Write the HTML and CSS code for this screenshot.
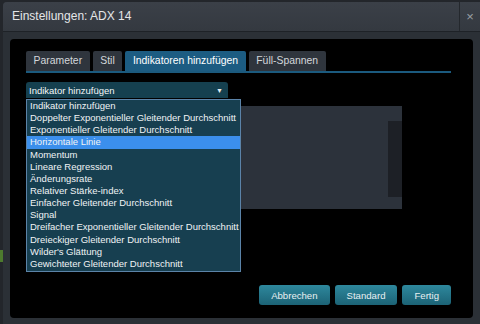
FILE: index.html
```html
<!DOCTYPE html>
<html lang="de">
<head>
    <meta charset="UTF-8">
    <meta name="viewport" content="width=device-width, initial-scale=1.0">
    <title>Einstellungen: ADX 14</title>
    <link rel="stylesheet" href="styles.css">
</head>
<body>
    <div class="backdrop">
        <div class="edge"><span class="edge-mark"></span></div>
        <div class="dialog">
            <div class="dialog-header">
                <span class="dialog-title">Einstellungen: ADX 14</span>
                <button class="close-btn">&times;</button>
            </div>
            <div class="dialog-body">
                <div class="panel">
                    <div class="tabs">
                        <a class="tab" href="#">Parameter</a>
                        <a class="tab" href="#">Stil</a>
                        <a class="tab active" href="#">Indikatoren hinzufügen</a>
                        <a class="tab" href="#">Füll-Spannen</a>
                    </div>

                    <div class="picker">
                        <div class="select">
                            <span>Indikator hinzufügen</span>
                            <span class="arrow">&#9660;</span>
                        </div>
                        <ul class="options">
                            <li>Indikator hinzufügen</li>
                            <li>Doppelter Exponentieller Gleitender Durchschnitt</li>
                            <li>Exponentieller Gleitender Durchschnitt</li>
                            <li class="hover">Horizontale Linie</li>
                            <li>Momentum</li>
                            <li>Lineare Regression</li>
                            <li>Änderungsrate</li>
                            <li>Relativer Stärke-index</li>
                            <li>Einfacher Gleitender Durchschnitt</li>
                            <li>Signal</li>
                            <li>Dreifacher Exponentieller Gleitender Durchschnitt</li>
                            <li>Dreieckiger Gleitender Durchschnitt</li>
                            <li>Wilder's Glättung</li>
                            <li>Gewichteter Gleitender Durchschnitt</li>
                        </ul>
                        <div class="added-list">
                            <div class="scroll-track"></div>
                        </div>
                    </div>

                    <div class="actions">
                        <button class="btn">Abbrechen</button>
                        <button class="btn">Standard</button>
                        <button class="btn">Fertig</button>
                    </div>
                </div>
            </div>
        </div>
    </div>
</body>
</html>
```

FILE: styles.css
```css
body {
    font-family: "Liberation Sans", Arial, sans-serif;
    margin: 0;
    padding: 0;
    background-color: #23262b;
    width: 480px;
    height: 324px;
    overflow: hidden;
}
.backdrop {
    display: flex;
    height: 324px;
}
.edge {
    width: 3px;
    display: flex;
    flex-direction: column;
    justify-content: flex-end;
    padding-bottom: 62px;
}
.edge-mark {
    display: block;
    height: 12px;
    background-color: #4d7a2e;
}
.dialog {
    flex: 1;
    margin-top: 2px;
    background-color: #2b3036;
    border-radius: 4px 0 0 0;
    display: flex;
    flex-direction: column;
}
.dialog-header {
    height: 29px;
    display: flex;
    align-items: stretch;
    background: linear-gradient(#3b4048, #343940);
    border-bottom: 1px solid #1e2227;
    border-radius: 4px 0 0 0;
}
.dialog-title {
    flex: 1;
    padding-left: 9px;
    line-height: 29px;
    font-size: 12px;
    color: #e4e6e8;
}
.close-btn {
    width: 21px;
    border: none;
    border-left: 1px solid #24282d;
    background: transparent;
    color: #9aa0a6;
    font-size: 13px;
    padding: 0;
    font-family: "Liberation Sans", Arial, sans-serif;
}
.dialog-body {
    flex: 1;
    padding: 7px 7px 6px 7px;
}
.panel {
    height: 100%;
    box-sizing: border-box;
    background-color: #000;
    border-radius: 4px;
    padding: 12px 22px 13px 16px;
    display: flex;
    flex-direction: column;
}
.tabs {
    display: flex;
    gap: 3px;
    border-bottom: 2px solid #1b5a7e;
}
.tab {
    height: 20px;
    line-height: 20px;
    padding: 0 7.6px;
    font-size: 10.4px;
    color: #d3d7db;
    background-color: #2f353d;
    text-decoration: none;
    border-radius: 2px 2px 0 0;
}
.tab.active {
    background-color: #1c5c82;
    color: #ffffff;
}
.picker {
    position: relative;
    margin-top: 9px;
}
.select {
    width: 202px;
    height: 16px;
    box-sizing: border-box;
    padding: 0 5px 0 3px;
    display: flex;
    justify-content: space-between;
    align-items: center;
    background-color: #15404f;
    border-radius: 3px 3px 0 0;
    color: #f4f7f8;
    font-size: 9.5px;
}
.arrow {
    font-size: 7px;
    color: #e8ecee;
}
.options {
    position: absolute;
    top: 17px;
    left: 0;
    width: 215px;
    box-sizing: border-box;
    margin: 0;
    padding: 0 0 1px;
    list-style: none;
    background-color: #173f50;
    border: 1px solid #5b83a8;
    z-index: 2;
}
.options li {
    height: 12.15px;
    line-height: 12px;
    padding-left: 3px;
    font-size: 9.5px;
    color: #f0f3f5;
    white-space: nowrap;
}
.options li.hover {
    background-color: #3b8fec;
}
.added-list {
    margin-top: 8px;
    width: 376px;
    height: 103px;
    background-color: #2c323b;
    display: flex;
    justify-content: flex-end;
    align-items: center;
}
.scroll-track {
    width: 14px;
    height: 76px;
    margin-top: 2px;
    background-color: #1d2026;
}
.actions {
    margin-top: auto;
    display: flex;
    justify-content: flex-end;
    gap: 5px;
}
.btn {
    height: 20px;
    padding: 0 12px;
    border: none;
    border-radius: 3px;
    background: linear-gradient(#2e889d, #1c6376);
    color: #e8f0f2;
    font-size: 9.6px;
    font-family: "Liberation Sans", Arial, sans-serif;
    cursor: pointer;
}
```
